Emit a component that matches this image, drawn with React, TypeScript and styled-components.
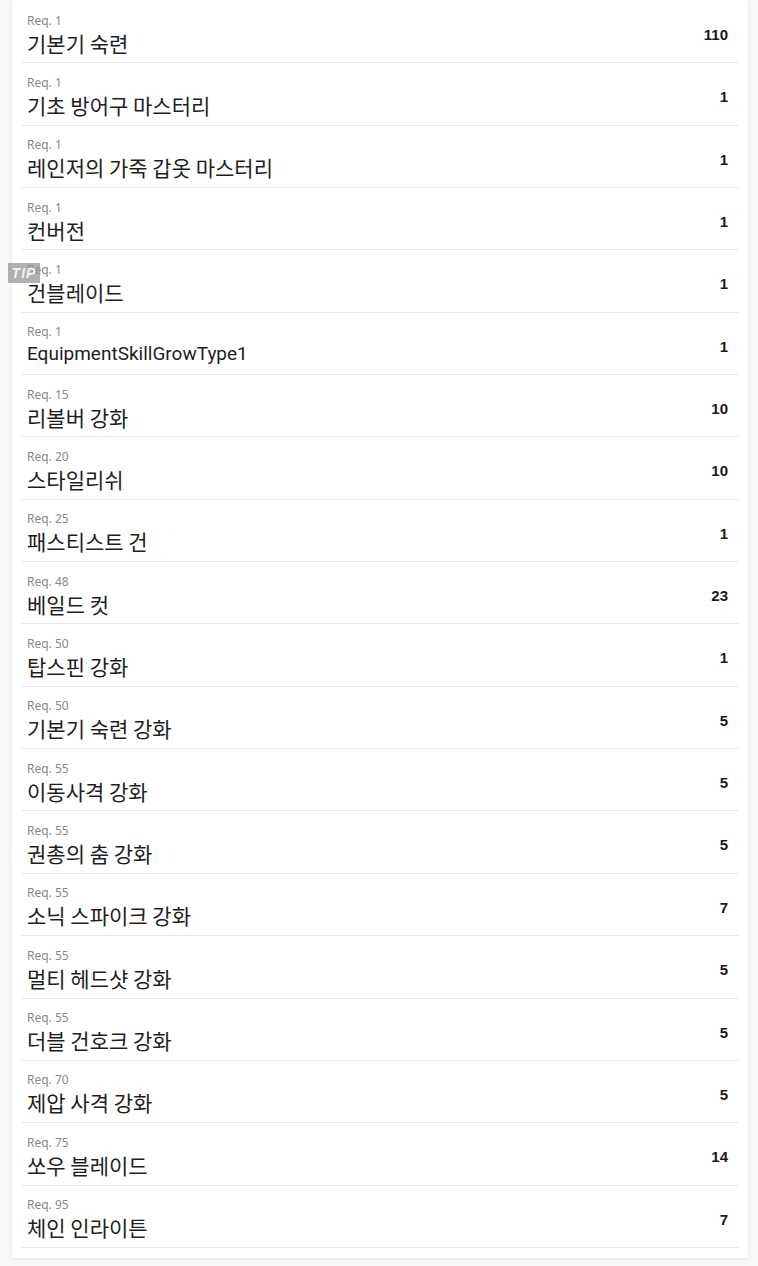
import React from "react";
import styled, { createGlobalStyle } from "styled-components";

const Global = createGlobalStyle`
  html, body { margin: 0; padding: 0; background: #f6f7f9; }
  body { font-family: "Noto Sans CJK KR", "Noto Sans", sans-serif; }
`;

const Page = styled.div`
  padding: 0 10px 9px 12px;
  position: relative;
`;

const Card = styled.div`
  background: #ffffff;
  padding: 1px 10px 10px 10px;
  border-radius: 0 0 3px 3px;
  box-shadow: 0 1px 4px rgba(0, 0, 0, 0.08);
`;

const Row = styled.div`
  display: flex;
  align-items: center;
  justify-content: space-between;
  padding: 10.5px 10px 6.85px 5px;
  border-bottom: 1px solid #e6e6e6;
`;

const Info = styled.div`
  display: flex;
  flex-direction: column;
`;

const Req = styled.span`
  font-family: "Noto Sans", "Noto Sans CJK KR", sans-serif;
  font-size: 12px;
  line-height: 18px;
  color: #888888;
`;

const Name = styled.span<{ $latin?: boolean }>`
  font-family: ${(p) =>
    p.$latin ? `Roboto, "Noto Sans CJK KR", sans-serif` : `"Noto Sans CJK KR", sans-serif`};
  font-size: ${(p) => (p.$latin ? "19px" : "21px")};
  line-height: 26px;
  color: #1e1e1e;
`;

const Count = styled.span`
  font-family: "Liberation Sans", Arial, sans-serif;
  font-weight: bold;
  font-size: 15px;
  color: #1a1a1a;
  margin-top: 2px;
`;

const Tip = styled.div`
  position: absolute;
  left: 8px;
  top: 263px;
  width: 32px;
  height: 20px;
  background: rgba(150, 150, 150, 0.75);
  color: rgba(255, 255, 255, 0.85);
  font-family: "Liberation Sans", Arial, sans-serif;
  font-style: italic;
  font-weight: bold;
  font-size: 14px;
  line-height: 20px;
  text-align: center;
  letter-spacing: 1px;
`;

const items: [number, string, number][] = [
  [1, "기본기 숙련", 110],
  [1, "기초 방어구 마스터리", 1],
  [1, "레인저의 가죽 갑옷 마스터리", 1],
  [1, "컨버전", 1],
  [1, "건블레이드", 1],
  [1, "EquipmentSkillGrowType1", 1],
  [15, "리볼버 강화", 10],
  [20, "스타일리쉬", 10],
  [25, "패스티스트 건", 1],
  [48, "베일드 컷", 23],
  [50, "탑스핀 강화", 1],
  [50, "기본기 숙련 강화", 5],
  [55, "이동사격 강화", 5],
  [55, "권총의 춤 강화", 5],
  [55, "소닉 스파이크 강화", 7],
  [55, "멀티 헤드샷 강화", 5],
  [55, "더블 건호크 강화", 5],
  [70, "제압 사격 강화", 5],
  [75, "쏘우 블레이드", 14],
  [95, "체인 인라이튼", 7],
];

export default function App() {
  return (
    <>
      <Global />
      <Page>
        <Card>
          {items.map(([req, name, n], i) => (
            <Row key={i}>
              <Info>
                <Req>Req. {req}</Req>
                <Name $latin={/^[A-Za-z0-9]+$/.test(name)}>{name}</Name>
              </Info>
              <Count>{n}</Count>
            </Row>
          ))}
        </Card>
        <Tip>TIP</Tip>
      </Page>
    </>
  );
}
